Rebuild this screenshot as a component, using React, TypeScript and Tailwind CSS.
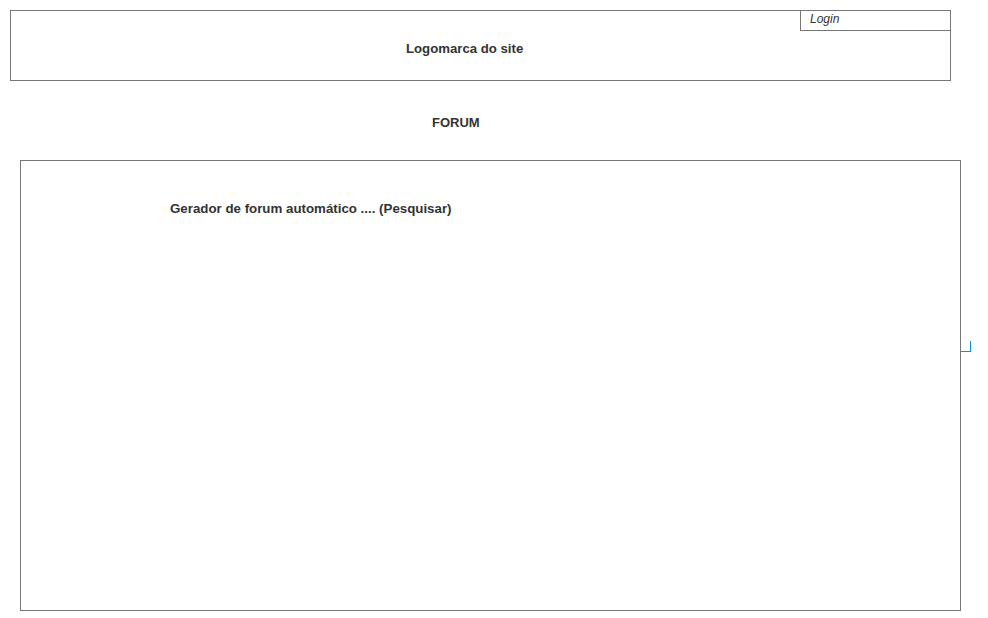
import React from "react";

export default function App() {
  return (
    <div
      className="w-[988px] h-[618px] bg-white text-[#333333] overflow-hidden"
      style={{ fontFamily: '"Liberation Sans", Arial, sans-serif' }}
    >
      <div className="pt-[10px] pl-[10px]">
        <header className="relative w-[941px] h-[71px] border border-[#777777] pl-[395px] pt-[30px]">
          <span className="block text-[13.2px] leading-[16px] font-bold">Logomarca do site</span>
          <div className="absolute top-[-1px] right-[-1px] w-[151px] h-[21px] border border-[#777777] pl-[9px] pt-[1px]">
            <span className="block text-[12px] leading-[15px] italic">Login</span>
          </div>
        </header>
      </div>
      <div className="h-[79px] pt-[34px] pl-[432px]">
        <span className="block text-[13px] leading-[16px] font-bold">FORUM</span>
      </div>
      <div className="relative ml-[20px] w-[941px] h-[451px] border border-[#777777] pt-[40px] pl-[149px]">
        <span className="block text-[13.3px] leading-[16px] font-bold">Gerador de forum automático .... (Pesquisar)</span>
        <div className="absolute left-[940px] top-[180px] w-[10px] h-[11px] border-r border-b border-[#0099cc]" />
      </div>
    </div>
  );
}
